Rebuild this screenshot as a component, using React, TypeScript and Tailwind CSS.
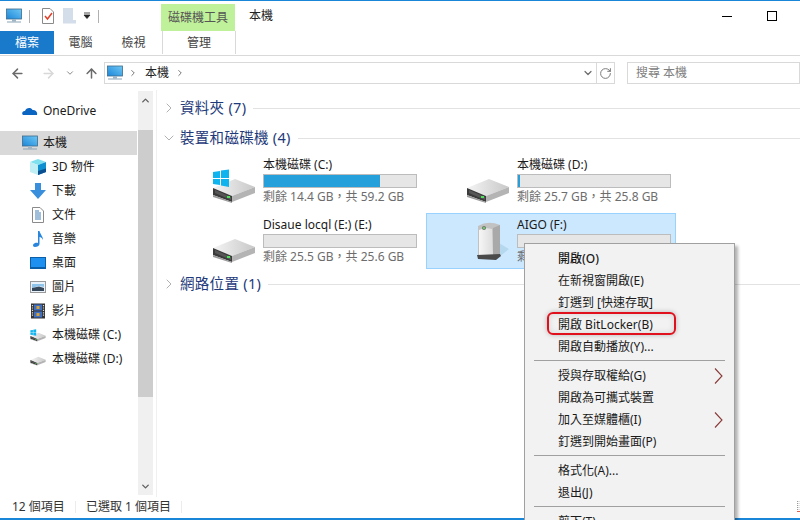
import React from 'react';
import { ChevronDown, ChevronRight, ChevronUp, ArrowLeft, ArrowRight, ArrowUp, RotateCw } from 'lucide-react';

const FONT = '"Noto Sans", "Noto Sans CJK TC", sans-serif';

const MonitorIcon = ({ size = 16 }: { size?: number }) => (
  <svg width={size} height={size} viewBox="0 0 16 16">
    <defs>
      <linearGradient id="mon" x1="0" y1="1" x2="1" y2="0">
        <stop offset="0" stopColor="#1b86d8" />
        <stop offset="1" stopColor="#6fc8f5" />
      </linearGradient>
    </defs>
    <rect x="0.5" y="1" width="15" height="10" fill="url(#mon)" stroke="#3d6a8c" strokeWidth="0.8" />
    <rect x="6" y="11" width="4" height="2.5" fill="#9fb4c4" />
    <rect x="1" y="13.5" width="14" height="1" fill="#8aa4b8" />
  </svg>
);

const DriveIcon = ({ windows = false, small = false }: { windows?: boolean; small?: boolean }) => (
  <svg width={small ? 16 : 44} height={small ? 16 : 40} viewBox="0 0 44 40">
    <defs>
      <linearGradient id="drvTop" x1="0" y1="0" x2="1" y2="0">
        <stop offset="0" stopColor="#f4f4f4" />
        <stop offset="1" stopColor="#c8c8c8" />
      </linearGradient>
    </defs>
    <path d="M1 23 L23 14 L43 22 L20 31 Z" fill="url(#drvTop)" />
    <path d="M20 31 L43 22 L43 28 L20 37 Z" fill="#b4b4b4" />
    <path d="M1 23 L20 31 L20 37 L1 30 Z" fill="#3a3a3a" />
    <path d="M1 30 L20 37 L20 38 L1 32 Z" fill="#9a9a9a" />
    <path d="M3 25 L19 32 L19 35 L3 28 Z" fill="#565656" />
    <rect x="15" y="31" width="3" height="2" fill="#4ee05a" />
    {windows && (
      <g fill="#0fb4ee">
        <path d="M1 7 L8 6 L8 13 L1 13 Z" />
        <path d="M9 5.5 L17 4.5 L17 13 L9 13 Z" />
        <path d="M1 14 L8 14 L8 20 L1 19 Z" />
        <path d="M9 14 L17 14 L17 22 L9 20.5 Z" />
      </g>
    )}
  </svg>
);

const UsbDriveIcon = () => (
  <svg width="40" height="44" viewBox="0 0 40 44" className="-mt-[4px]">
    <defs>
      <linearGradient id="usb" x1="0" y1="0" x2="1" y2="0">
        <stop offset="0" stopColor="#f6f6f6" />
        <stop offset="1" stopColor="#dcdcdc" />
      </linearGradient>
    </defs>
    <path d="M29 22 L39 28 L29 36 Z" fill="#b5d8ee" />
    <path d="M8 5 Q18 -1 30 4 L30 34 L8 35 Z" fill="#c2c2c2" />
    <path d="M9 9 Q15 6 22 8 L23 34 L9 34 Z" fill="url(#usb)" />
    <path d="M23 7 L30 4 L30 34 L23 34 Z" fill="#a9a9a9" />
    <circle cx="14" cy="7" r="2" fill="#6a7a6a" />
    <circle cx="14" cy="7" r="1" fill="#6fdc6f" />
    <path d="M7 34 L30 33 L31 35 L26 39 L8 38 Z" fill="#4a4a4a" />
  </svg>
);

const Icon3D = () => (
  <svg width="16" height="16" viewBox="0 0 16 16">
    <path d="M0 3 L8 0 L16 3 L8 6 Z" fill="#7fe0ee" />
    <path d="M0 3 L8 6 L8 16 L0 13 Z" fill="#bfeff5" />
    <path d="M8 6 L16 3 L16 13 L8 16 Z" fill="#0f8fd0" />
    <path d="M8 12 L16 9.5 L16 13 L8 16 Z" fill="#0b4f8f" />
  </svg>
);

const DownloadIcon = () => (
  <svg width="16" height="16" viewBox="0 0 16 16">
    <path d="M5 0 H11 V7 H16 L8 16 L0 7 H5 Z" fill="#3a8fdc" />
  </svg>
);

const DocIcon = () => (
  <svg width="16" height="16" viewBox="0 0 16 16">
    <path d="M2.5 0.5 H10 L13.5 4 V15.5 H2.5 Z" fill="#fff" stroke="#8a8a8a" />
    <path d="M5 4 H9 M5 6 H11 M5 8 H11 M5 10 H11 M5 12 H11" stroke="#3f7fb5" />
  </svg>
);

const MusicIcon = () => (
  <svg width="16" height="16" viewBox="0 0 16 16">
    <path d="M8 0 H9.5 C10 3 13 5 13 9 C12 7 11 6 9.5 6 V13 C9.5 15 7 16 5 16 C3 16 2.5 14 3.5 13 C5 11.5 7 11.5 8 12 Z" fill="#2a86dc" />
  </svg>
);

const DesktopIcon = () => (
  <svg width="16" height="16" viewBox="0 0 16 16">
    <rect x="0.5" y="2.5" width="15" height="11" fill="#1e90f0" stroke="#0b5fa8" />
    <rect x="1" y="12" width="14" height="1.5" fill="#0b5fa8" />
  </svg>
);

const PictureIcon = () => (
  <svg width="16" height="16" viewBox="0 0 16 16">
    <rect x="0.5" y="2.5" width="15" height="11" fill="#e8f2fa" stroke="#9a9a9a" />
    <path d="M2 5 H14 V8 L9 7 L2 9 Z" fill="#8fc4ea" />
    <path d="M2 9 L9 7.5 L14 9 V12 H2 Z" fill="#37475a" />
  </svg>
);

const VideoIcon = () => (
  <svg width="16" height="16" viewBox="0 0 16 16">
    <rect x="1" y="0.5" width="14" height="15" fill="#333" />
    <rect x="4" y="1.5" width="8" height="6" fill="#3f6fc0" />
    <rect x="4" y="8.5" width="8" height="6" fill="#3f6fc0" />
    <rect x="6.5" y="3" width="3" height="3" fill="#d8a032" />
    <rect x="6.5" y="10" width="3" height="3" fill="#d8a032" />
    <path d="M2.5 2 V14 M13.5 2 V14" stroke="#ddd" strokeWidth="1.2" strokeDasharray="1.2 1.2" />
  </svg>
);

const NavRow = ({ icon, label, indent = true }: { icon: React.ReactNode; label: string; indent?: boolean }) => (
  <div className={`flex h-6 items-center ${indent ? 'pl-[30px] gap-[6px]' : 'pl-[22px] gap-[5px]'}`}>
    <span className="flex h-4 w-4 shrink-0 items-center justify-center">{icon}</span>
    <span className="text-xs text-[#1a1a1a]">{label}</span>
  </div>
);

const SectionHeader = ({ open, label }: { open: boolean; label: string }) => (
  <div className="flex h-[30px] items-center">
    <span className="flex w-4 justify-center text-[#8a8a8a]">
      {open ? <ChevronDown size={18} strokeWidth={1} /> : <ChevronRight size={18} strokeWidth={1} />}
    </span>
    <span className="ml-[3px] whitespace-nowrap text-[14.5px] tracking-[0.3px] text-[#1e3a7a]">{label}</span>
    <span className="ml-[7px] h-px flex-1 bg-[#e2e2e2]" />
  </div>
);

const DriveTile = ({
  name,
  free,
  percent,
  barColor = 'bg-[#26a0da]',
  icon,
  selected = false,
}: {
  name: string;
  free: string;
  percent: number;
  barColor?: string;
  icon: React.ReactNode;
  selected?: boolean;
}) => (
  <div className={`flex h-14 w-[250px] border ${selected ? 'border-[#99d1ff] bg-[#cce8ff]' : 'border-transparent'}`}>
    <div className="flex w-[90px] shrink-0 items-start justify-end pr-[7px] pt-[11px]">{icon}</div>
    <div className="w-[154px] pt-[2px]">
      <div className="h-[18px] whitespace-nowrap text-xs leading-[18px] text-[#1a1a1a]">{name}</div>
      <div className="h-[14px] border border-[#bcbcbc] bg-[#e6e6e6]">
        <div className="h-full" style={{ width: `${percent}%` }}>
          <div className={`h-full ${barColor}`} />
        </div>
      </div>
      <div className="whitespace-nowrap text-xs leading-[18px] text-[#6d6d6d]">{free}</div>
    </div>
  </div>
);

const MenuItem = ({ label, arrow = false, bold = false }: { label: string; arrow?: boolean; bold?: boolean }) => (
  <div className="flex h-[22px] items-center justify-between pl-[33px] pr-[11px]">
    <span className={`whitespace-nowrap text-xs text-[#1a1a1a] ${bold ? 'font-medium' : ''}`}>{label}</span>
    {arrow && (
      <svg width="9" height="16" viewBox="0 0 9 16">
        <path d="M1 0.5 L8 8 L1 15.5" fill="none" stroke="#8a3a3a" strokeWidth="1.1" />
      </svg>
    )}
  </div>
);

const MenuSep = () => <div className="mx-[9px] mb-[4px] mt-[2px] h-px bg-[#a0a0a0]" />;

export default function App() {
  return (
    <div className="relative h-[520px] w-[800px] overflow-hidden bg-white" style={{ fontFamily: FONT }}>
      <div className="h-px bg-[#1a86d8]" />

      {/* Title bar */}
      <div className="flex h-[30px] items-center">
        <span className="ml-[6px]"><MonitorIcon /></span>
        <span className="ml-[7px] h-[13px] w-px bg-[#b0b0b0]" />
        <svg className="ml-[11px]" width="14" height="16" viewBox="0 0 14 16">
          <path d="M1.5 0.5 H9 L12.5 4 V15.5 H1.5 Z" fill="#fff" stroke="#8a8a8a" />
          <path d="M4 8 L6.5 11 L11 5" fill="none" stroke="#e0402a" strokeWidth="1.5" />
        </svg>
        <svg className="ml-[7px]" width="14" height="16" viewBox="0 0 14 16">
          <path d="M1 0 H11 V12 H14 V15.5 H1 Z" fill="#d4deeb" />
        </svg>
        <svg className="ml-[6px]" width="10" height="10" viewBox="0 0 10 10">
          <path d="M2 2 H8 M2 4 H8 L5 7.5 Z" stroke="#222" fill="#222" strokeWidth="0.8" />
        </svg>
        <span className="ml-[6px] h-[13px] w-px bg-[#b0b0b0]" />
        <div className="ml-[62px] flex h-[27px] w-[74px] items-center justify-center self-end bg-[#bff09a] text-xs text-[#555]">磁碟機工具</div>
        <span className="ml-[14px] text-xs text-[#222]">本機</span>
        <span className="ml-auto mr-[23px] flex items-center gap-[35px]">
          <span className="h-px w-[10px] bg-black" />
          <span className="h-[10px] w-[10px] border border-black" />
        </span>
      </div>

      {/* Tabs */}
      <div className="flex h-[24px] items-stretch pb-px text-xs">
        <div className="flex w-[54px] items-center justify-center bg-[#1979ca] text-white">檔案</div>
        <div className="flex w-[53px] items-center justify-center text-[#444]">電腦</div>
        <div className="flex w-[53px] items-center justify-center text-[#444]">檢視</div>
        <div className="ml-[2px] flex w-[74px] items-center justify-center border-x border-[#d9d9d9] text-[#444]">管理</div>
      </div>
      <div className="h-px bg-[#d9d9d9]" />

      {/* Address bar */}
      <div className="flex h-[34px] items-center">
        <ArrowLeft size={15} strokeWidth={2.4} className="ml-[10px] text-[#6b6b6b]" />
        <ArrowRight size={15} strokeWidth={2.4} className="ml-[16px] text-[#d8d8d8]" />
        <ChevronDown size={10} strokeWidth={2.4} className="ml-[9px] text-[#8a8a8a]" />
        <ArrowUp size={15} strokeWidth={2.4} className="ml-[9px] text-[#6b6b6b]" />
        <div className="ml-[5px] flex h-[22px] w-[511px] items-center border border-[#d9d9d9]">
          <span className="ml-[2px]"><MonitorIcon /></span>
          <ChevronRight size={10} strokeWidth={2.4} className="ml-[5px] text-[#777]" />
          <span className="ml-[7px] text-xs text-[#222]">本機</span>
          <ChevronRight size={10} strokeWidth={2.4} className="ml-[6px] text-[#777]" />
          <ChevronDown size={12} strokeWidth={2.4} className="ml-auto mr-[2px] text-[#6b6b6b]" />
          <div className="flex h-full w-[18px] items-center justify-center border-l border-[#d9d9d9]">
            <RotateCw size={13} strokeWidth={1.8} className="text-[#777]" />
          </div>
        </div>
        <div className="ml-[12px] flex h-[22px] flex-1 items-center border border-[#d9d9d9] pl-[8px] text-xs text-[#808080]">搜尋 本機</div>
      </div>

      {/* Main area */}
      <div className="flex h-[407px]">
        <div className="flex w-[157px] shrink-0 border-r border-[#f0f0f0]">
          <div className="w-[138px] pr-px pt-[9px]">
            <NavRow indent={false} label="OneDrive" icon={
              <svg width="16" height="16" viewBox="0 0 16 16">
                <path d="M1 12 C-1 10 1 7.5 3 8 C4 4.5 9 4 10.5 7 C13 6.5 16 9 15 12 Z" fill="#0a64c2" />
              </svg>
            } />
            <div className="mt-[8px] bg-[#d9d9d9]">
              <NavRow indent={false} label="本機" icon={<MonitorIcon />} />
            </div>
            <NavRow label="3D 物件" icon={<Icon3D />} />
            <NavRow label="下載" icon={<DownloadIcon />} />
            <NavRow label="文件" icon={<DocIcon />} />
            <NavRow label="音樂" icon={<MusicIcon />} />
            <NavRow label="桌面" icon={<DesktopIcon />} />
            <NavRow label="圖片" icon={<PictureIcon />} />
            <NavRow label="影片" icon={<VideoIcon />} />
            <NavRow label="本機磁碟 (C:)" icon={<DriveIcon small windows />} />
            <NavRow label="本機磁碟 (D:)" icon={<DriveIcon small />} />
          </div>
          <div className="mt-px flex h-[404px] w-[15px] flex-col bg-[#f0f0f0]">
            <div className="flex h-[39px] justify-center pt-[4px]"><ChevronUp size={11} strokeWidth={3} className="text-[#606060]" /></div>
            <div className="h-[267px] bg-[#cdcdcd]" />
            <div className="flex-1" />
            <div className="flex h-[18px] items-center justify-center"><ChevronDown size={11} strokeWidth={3} className="text-[#606060]" /></div>
          </div>
        </div>

        <div className="flex-1 pl-[4px] pt-[3px]">
          <SectionHeader open={false} label="資料夾 (7)" />
          <SectionHeader open label="裝置和磁碟機 (4)" />
          <div className="ml-[11px] grid w-[504px] grid-cols-[250px_250px] gap-x-[4px] gap-y-[4px]">
            <DriveTile name="本機磁碟 (C:)" free="剩餘 14.4 GB，共 59.2 GB" percent={76} icon={<DriveIcon windows />} />
            <DriveTile name="本機磁碟 (D:)" free="剩餘 25.7 GB，共 25.8 GB" percent={1} icon={<DriveIcon />} />
            <DriveTile name="Disaue locql (E:) (E:)" free="剩餘 25.5 GB，共 25.6 GB" percent={0} icon={<DriveIcon />} />
            <DriveTile selected name="AIGO (F:)" free="剩餘" percent={0} icon={<UsbDriveIcon />} />
          </div>
          <SectionHeader open={false} label="網路位置 (1)" />
        </div>
      </div>

      {/* Status bar */}
      <div className="flex h-[20px] items-center text-xs text-[#333]">
        <span className="ml-[12px] w-[63px]">12 個項目</span>
        <span className="h-[12px] w-px bg-[#ececec]" />
        <span className="ml-[10px] w-[95px]">已選取 1 個項目</span>
        <span className="h-[12px] w-px bg-[#ececec]" />
        <svg className="ml-auto" width="3" height="12" viewBox="0 0 3 12">
          <path d="M0.5 0 V12" stroke="#9a9a9a" strokeDasharray="1 1" />
          <path d="M2 0 V12" stroke="#c8c8c8" strokeDasharray="1 1" />
          <rect x="0" y="10" width="3" height="1" fill="#e06050" />
        </svg>
      </div>
      <div className="absolute bottom-0 left-0 h-[2px] w-full bg-[#1a86d8]" />

      {/* Context menu */}
      <div className="absolute left-[524px] top-[243px] h-[290px] w-[211px] border border-[#a0a0a0] bg-[#f2f2f2] pt-[4px] shadow-[3px_3px_3px_rgba(0,0,0,0.3)]">
        <MenuItem bold label="開啟(O)" />
        <MenuItem label="在新視窗開啟(E)" />
        <MenuItem label="釘選到 [快速存取]" />
        <MenuItem label="開啟 BitLocker(B)" />
        <MenuItem label="開啟自動播放(Y)..." />
        <MenuSep />
        <MenuItem arrow label="授與存取權給(G)" />
        <MenuItem label="開啟為可攜式裝置" />
        <MenuItem arrow label="加入至媒體櫃(I)" />
        <MenuItem label="釘選到開始畫面(P)" />
        <MenuSep />
        <MenuItem label="格式化(A)..." />
        <MenuItem label="退出(J)" />
        <MenuSep />
        <MenuItem label="剪下(T)" />
      </div>

      {/* Red highlight around BitLocker */}
      <div className="absolute left-[547px] top-[312px] h-[23px] w-[129px] rounded-[6px] border-2 border-[#e0101c] shadow-[0_0_5px_rgba(0,0,0,0.25),inset_0_0_6px_rgba(0,0,0,0.12)]" />
    </div>
  );
}
